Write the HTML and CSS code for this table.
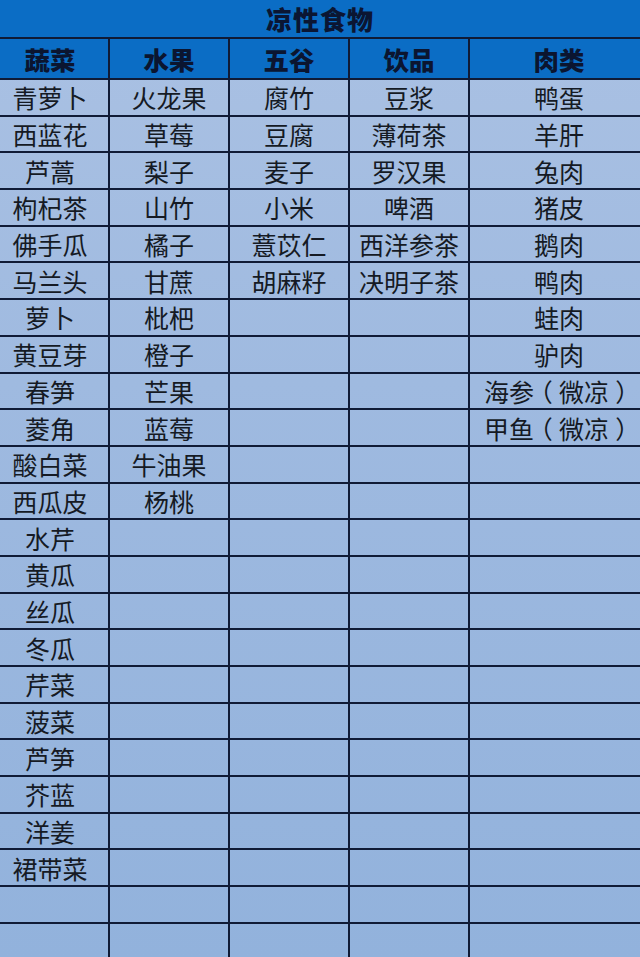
FILE: index.html
```html
<!DOCTYPE html>
<html lang="zh-CN">
<head>
<meta charset="utf-8">
<title>凉性食物</title>
<link rel="stylesheet" href="styles.css">
</head>
<body>
<div class="sheet">
  <div class="title">凉性食物</div>
  <div class="head">蔬菜</div><div class="head">水果</div><div class="head">五谷</div><div class="head">饮品</div><div class="head">肉类</div>
  <div class="cell">青萝卜</div><div class="cell">火龙果</div><div class="cell">腐竹</div><div class="cell">豆浆</div><div class="cell">鸭蛋</div>
  <div class="cell">西蓝花</div><div class="cell">草莓</div><div class="cell">豆腐</div><div class="cell">薄荷茶</div><div class="cell">羊肝</div>
  <div class="cell">芦蒿</div><div class="cell">梨子</div><div class="cell">麦子</div><div class="cell">罗汉果</div><div class="cell">兔肉</div>
  <div class="cell">枸杞茶</div><div class="cell">山竹</div><div class="cell">小米</div><div class="cell">啤酒</div><div class="cell">猪皮</div>
  <div class="cell">佛手瓜</div><div class="cell">橘子</div><div class="cell">薏苡仁</div><div class="cell">西洋参茶</div><div class="cell">鹅肉</div>
  <div class="cell">马兰头</div><div class="cell">甘蔗</div><div class="cell">胡麻籽</div><div class="cell">决明子茶</div><div class="cell">鸭肉</div>
  <div class="cell">萝卜</div><div class="cell">枇杷</div><div class="cell"></div><div class="cell"></div><div class="cell">蛙肉</div>
  <div class="cell">黄豆芽</div><div class="cell">橙子</div><div class="cell"></div><div class="cell"></div><div class="cell">驴肉</div>
  <div class="cell">春笋</div><div class="cell">芒果</div><div class="cell"></div><div class="cell"></div><div class="cell">海参<span class="paren">（</span>微凉<span class="paren">）</span></div>
  <div class="cell">菱角</div><div class="cell">蓝莓</div><div class="cell"></div><div class="cell"></div><div class="cell">甲鱼<span class="paren">（</span>微凉<span class="paren">）</span></div>
  <div class="cell">酸白菜</div><div class="cell">牛油果</div><div class="cell"></div><div class="cell"></div><div class="cell"></div>
  <div class="cell">西瓜皮</div><div class="cell">杨桃</div><div class="cell"></div><div class="cell"></div><div class="cell"></div>
  <div class="cell">水芹</div><div class="cell"></div><div class="cell"></div><div class="cell"></div><div class="cell"></div>
  <div class="cell">黄瓜</div><div class="cell"></div><div class="cell"></div><div class="cell"></div><div class="cell"></div>
  <div class="cell">丝瓜</div><div class="cell"></div><div class="cell"></div><div class="cell"></div><div class="cell"></div>
  <div class="cell">冬瓜</div><div class="cell"></div><div class="cell"></div><div class="cell"></div><div class="cell"></div>
  <div class="cell">芹菜</div><div class="cell"></div><div class="cell"></div><div class="cell"></div><div class="cell"></div>
  <div class="cell">菠菜</div><div class="cell"></div><div class="cell"></div><div class="cell"></div><div class="cell"></div>
  <div class="cell">芦笋</div><div class="cell"></div><div class="cell"></div><div class="cell"></div><div class="cell"></div>
  <div class="cell">芥蓝</div><div class="cell"></div><div class="cell"></div><div class="cell"></div><div class="cell"></div>
  <div class="cell">洋姜</div><div class="cell"></div><div class="cell"></div><div class="cell"></div><div class="cell"></div>
  <div class="cell">裙带菜</div><div class="cell"></div><div class="cell"></div><div class="cell"></div><div class="cell"></div>
  <div class="cell"></div><div class="cell"></div><div class="cell"></div><div class="cell"></div><div class="cell"></div>
  <div class="cell"></div><div class="cell"></div><div class="cell"></div><div class="cell"></div><div class="cell"></div>
</div>
</body>
</html>
```

FILE: styles.css
```css
html, body {
  margin: 0;
  padding: 0;
  width: 640px;
  height: 957px;
  overflow: hidden;
  background: #9ab6de;
}

.sheet {
  width: 656px;
  margin-left: -8px;
  display: grid;
  grid-template-columns: 116px 118px 118px 118px 178px;
  grid-template-rows: 37px 39px;
  grid-auto-rows: 34.7px;
  gap: 2px;
  background: #101b36;
  font-family: "Noto Sans CJK SC", "Noto Sans", sans-serif;
}

.title {
  grid-column: 1 / -1;
  background: #0b6dc5;
  color: #0b1633;
  font-weight: 900;
  font-size: 26px;
  display: flex;
  align-items: center;
  justify-content: center;
  letter-spacing: 1px;
}

.head {
  background: #0b6dc5;
  color: #0b1530;
  font-weight: 900;
  font-size: 25.5px;
  display: flex;
  align-items: center;
  justify-content: center;
}

.cell {
  background: linear-gradient(180deg, #aac1e3 0%, #9fbae0 40%, #92b2dc 100%) fixed;
  color: #151a24;
  font-size: 25px;
  display: flex;
  align-items: center;
  justify-content: center;
  white-space: nowrap;
}

.paren {
  display: inline-block;
  width: 1em;
  text-align: center;
  font-feature-settings: "halt";
}
```
